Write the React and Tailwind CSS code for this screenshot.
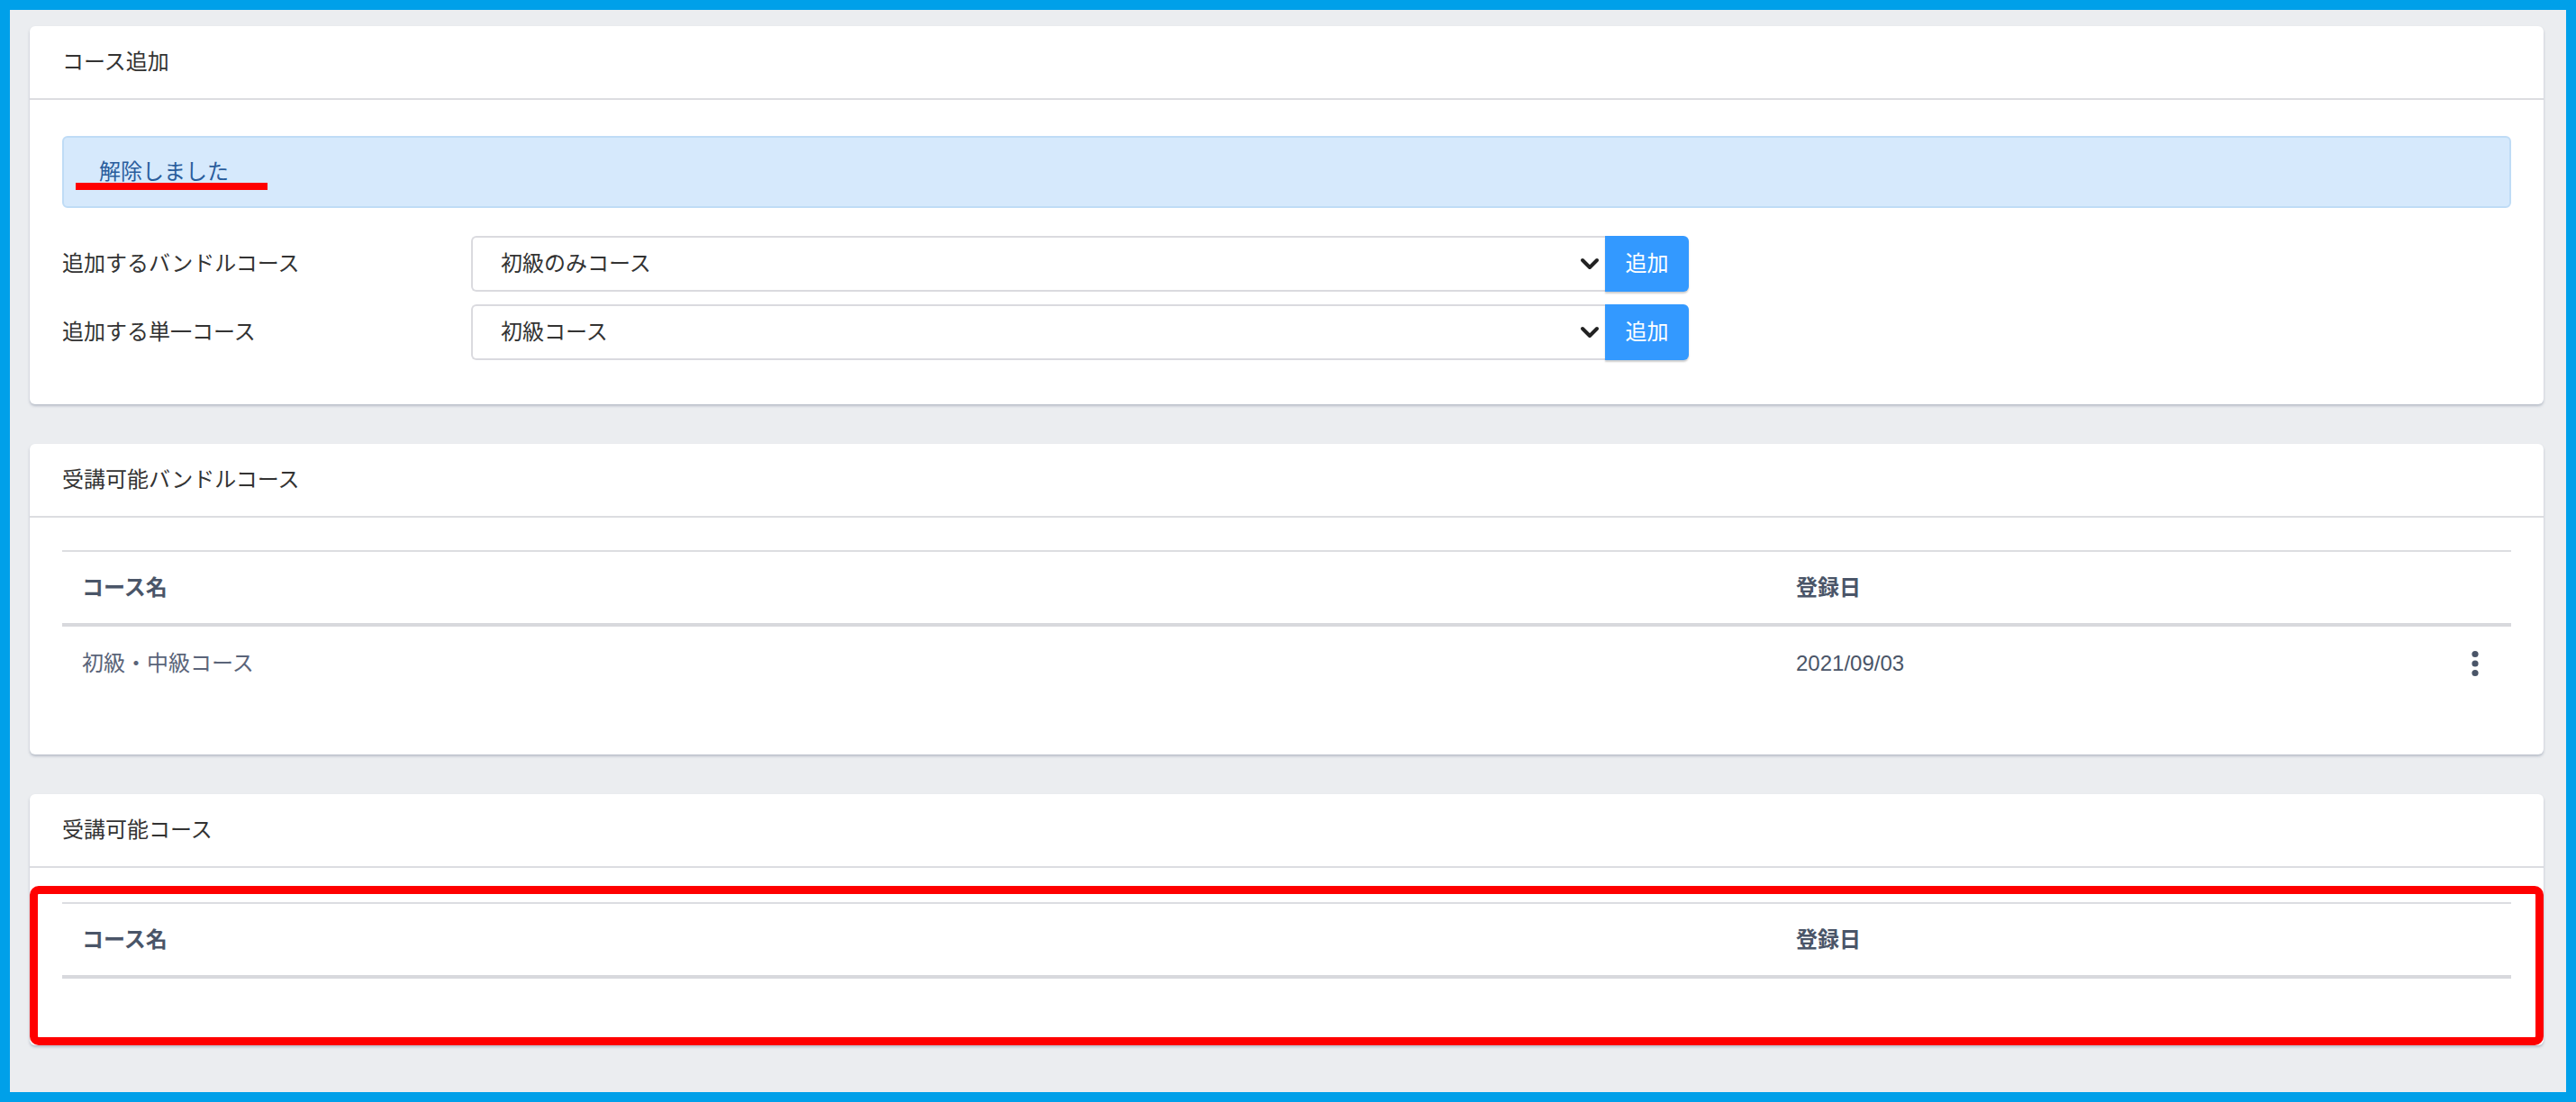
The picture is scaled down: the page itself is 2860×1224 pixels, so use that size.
const font = { fontFamily: '"Liberation Sans", "Noto Sans CJK JP", sans-serif' }

function Card({ title, children, className = '' }) {
  return (
    <div className={`relative bg-white rounded-[6px] shadow-[0_2px_3px_rgba(120,130,150,0.45)] ${className}`}>
      <div className="h-[82px] flex items-center px-[36px] border-b-2 border-[#dcdde1] text-[24px] text-[#333]">
        {title}
      </div>
      {children}
    </div>
  )
}

function SelectRow({ label, value }) {
  return (
    <div className="flex items-center">
      <div className="w-[454px] text-[24px] text-[#333]">{label}</div>
      <div className="flex h-[62px]">
        <div className="w-[1259px] flex items-center justify-between pl-[31px] pr-[6px] border-2 border-r-0 border-[#dadadf] rounded-l-[6px] text-[24px] text-[#333]">
          <span>{value}</span>
          <svg width="22" height="16" viewBox="0 0 22 16" fill="none">
            <path d="M3 4l8 8 8-8" stroke="#222" strokeWidth="4" strokeLinecap="round" strokeLinejoin="round" />
          </svg>
        </div>
        <button className="w-[93px] bg-[#3399ff] text-white text-[24px] rounded-r-[6px] shadow-[0_2px_2px_rgba(0,0,0,0.2)]">
          追加
        </button>
      </div>
    </div>
  )
}

function Kebab() {
  return (
    <svg width="10" height="30" viewBox="0 0 10 30" className="inline-block" fill="#4a5568">
      <circle cx="5" cy="4.5" r="3.6" />
      <circle cx="5" cy="15" r="3.6" />
      <circle cx="5" cy="25.5" r="3.6" />
    </svg>
  )
}

function CourseTable({ rows }) {
  return (
    <table className="w-full border-collapse">
      <thead>
        <tr className="border-t-2 border-b-[4px] border-t-[#dcdde1] border-b-[#d8d9dd]">
          <th className="h-[82px] w-[1903px] text-left pl-[22px] text-[24px] font-bold text-[#4a5568]">コース名</th>
          <th className="text-left pl-[22px] text-[24px] font-semibold text-[#4a5568]">登録日</th>
          <th className="w-[80px]"></th>
        </tr>
      </thead>
      <tbody>
        {rows.map(r => (
          <tr key={r.name}>
            <td className="h-[84px] pl-[22px] text-[24px] text-[#5a6479]">{r.name}</td>
            <td className="pl-[22px] text-[24px] text-[#4a5568]">{r.date}</td>
            <td className="text-center">
              <Kebab />
            </td>
          </tr>
        ))}
      </tbody>
    </table>
  )
}

export default function App() {
  return (
    <div style={font} className="h-[1224px] border-[11px] border-[#00a0e9] bg-[#ebedf0] pt-[18px] pl-[22px] pr-[25px] flex flex-col gap-[44px]">
      <Card title="コース追加">
        <div className="px-[36px] pt-[40px] pb-[49px]">
          <div className="relative h-[80px] flex items-center pl-[39px] bg-[#d6e9fc] border-2 border-[#bfdcf6] rounded-[6px] text-[24px] text-[#2a5d9c]">
            解除しました
            <div className="absolute left-[13px] top-[50px] w-[213px] h-[8px] bg-[#ff0000]"></div>
          </div>
          <div className="mt-[31px] flex flex-col gap-[14px]">
            <SelectRow label="追加するバンドルコース" value="初級のみコース" />
            <SelectRow label="追加する単一コース" value="初級コース" />
          </div>
        </div>
      </Card>

      <Card title="受講可能バンドルコース">
        <div className="px-[36px] pt-[36px] pb-[60px]">
          <CourseTable rows={[{ name: '初級・中級コース', date: '2021/09/03' }]} />
        </div>
      </Card>

      <Card title="受講可能コース">
        <div className="px-[36px] pt-[38px] pb-[74px]">
          <CourseTable rows={[]} />
        </div>
        <div className="absolute left-0 right-0 top-[102px] bottom-0 border-[9px] border-[#ff0000] rounded-[10px] pointer-events-none"></div>
      </Card>
    </div>
  )
}
